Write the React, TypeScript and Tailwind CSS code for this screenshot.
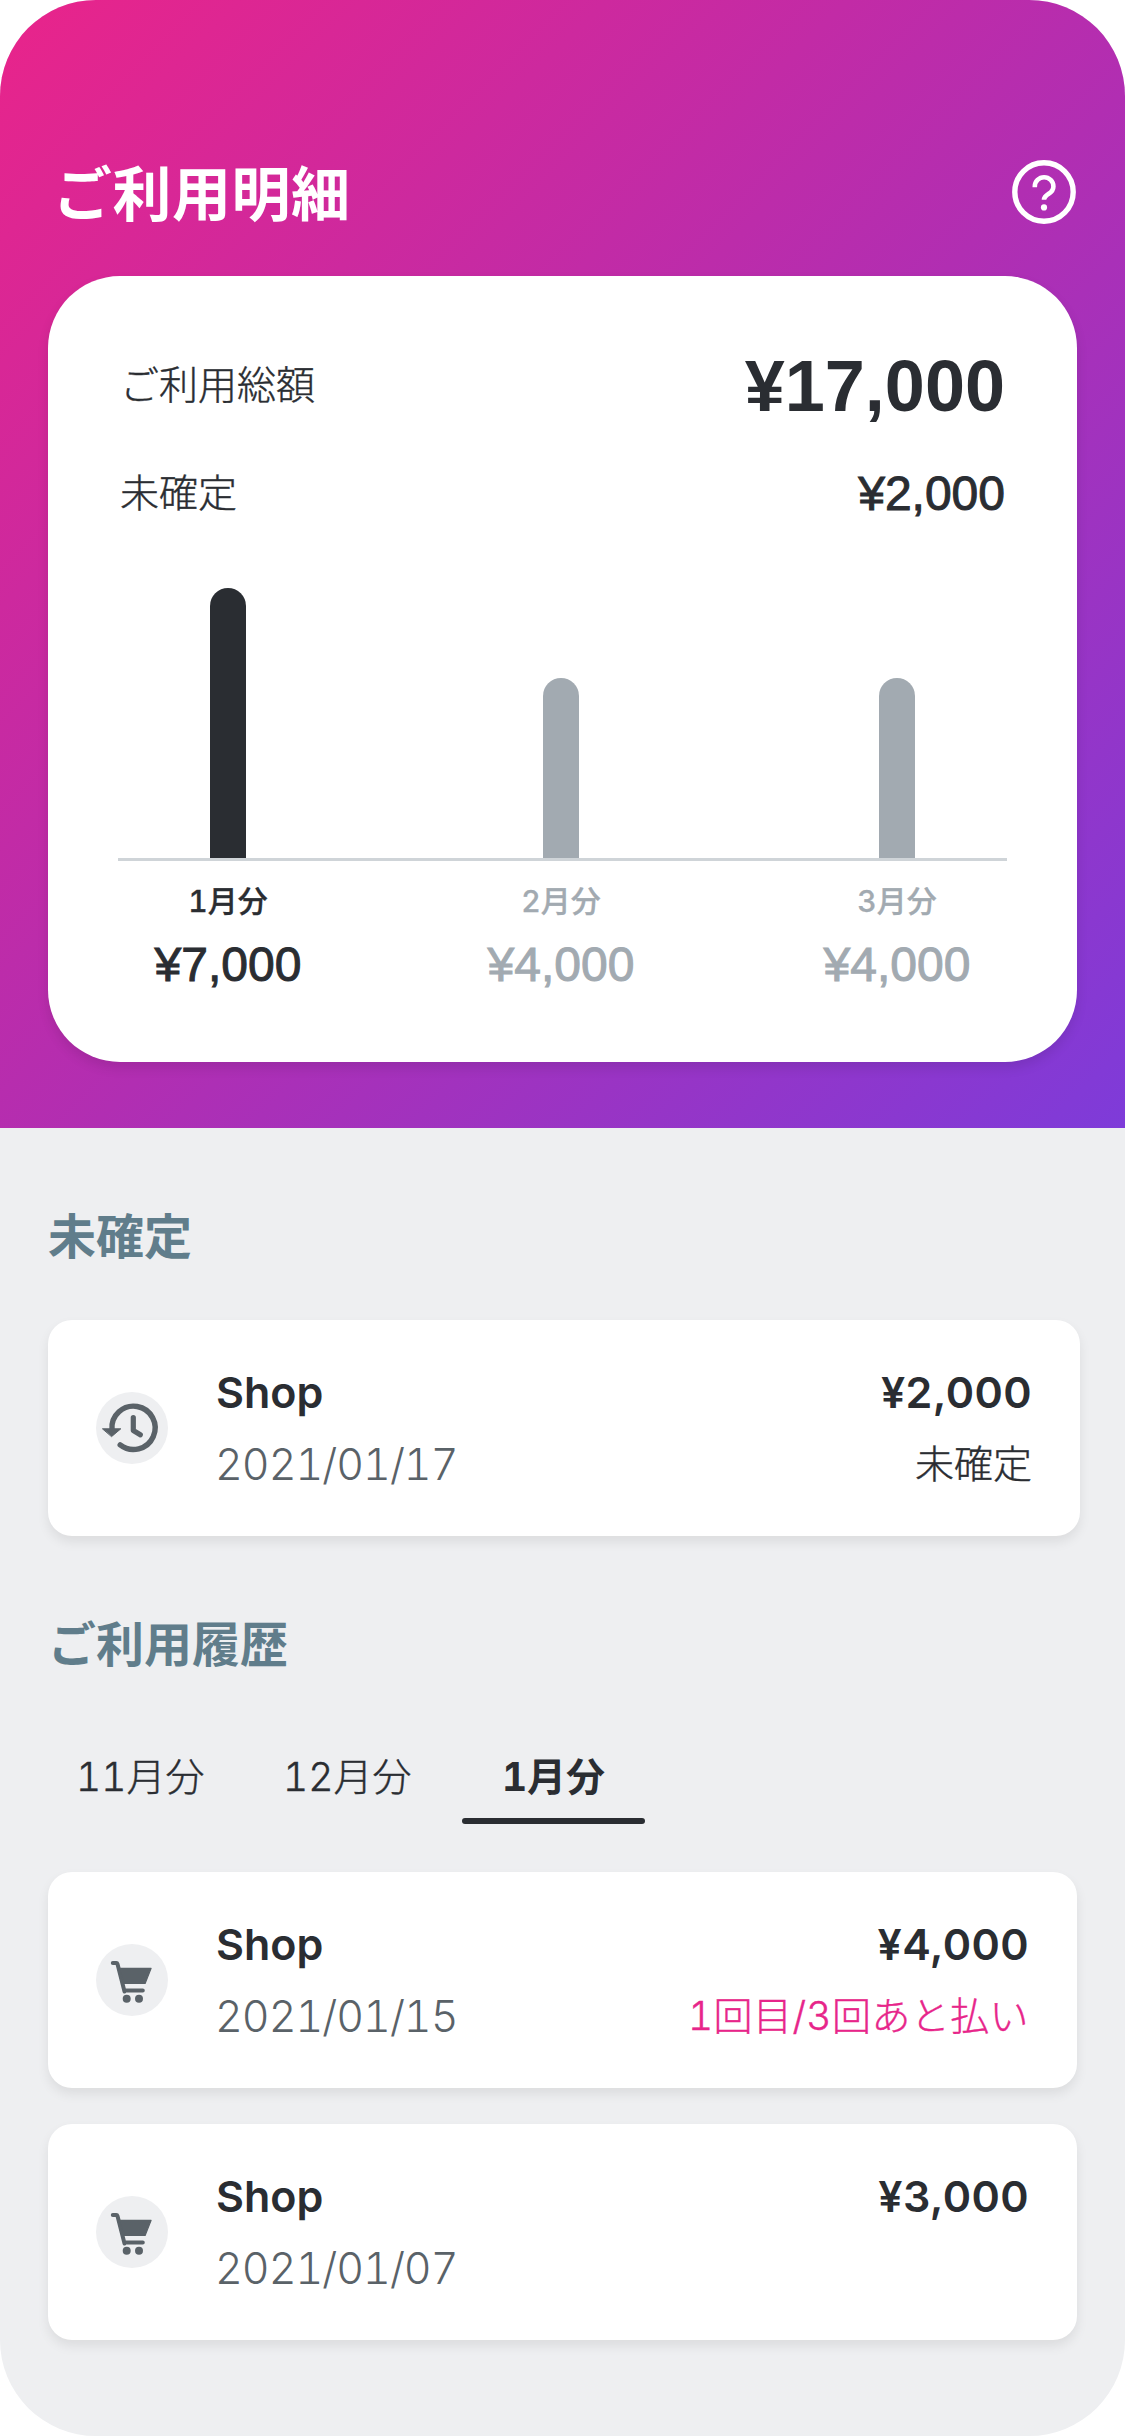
type Month = {
  label: string;
  amount: string;
  barHeight: string;
  bar: string;
  text: string;
  stroke: string;
  offset: string;
};

const months: Month[] = [
  {
    label: "1月分",
    amount: "¥7,000",
    barHeight: "h-[270px]",
    bar: "bg-[#2a2d32]",
    text: "text-[#2a2d32]",
    stroke: "[-webkit-text-stroke:1px_#2a2d32]",
    offset: "",
  },
  {
    label: "2月分",
    amount: "¥4,000",
    barHeight: "h-[180px]",
    bar: "bg-[#a2aab1]",
    text: "text-[#a2aab1]",
    stroke: "[-webkit-text-stroke:1px_#a2aab1]",
    offset: "mr-[3px]",
  },
  {
    label: "3月分",
    amount: "¥4,000",
    barHeight: "h-[180px]",
    bar: "bg-[#a2aab1]",
    text: "text-[#a2aab1]",
    stroke: "[-webkit-text-stroke:1px_#a2aab1]",
    offset: "",
  },
];

const HelpIcon = () => (
  <svg viewBox="0 0 64 64" className="size-16" fill="none" stroke="white">
    <circle cx="32" cy="32" r="29.2" strokeWidth="5.400" />
    <path
      d="M22.800 27.200v-.8a9.300 9.200 0 0 1 18.600 0c0 3.800-2 5.600-4.700 7.300-3 1.900-4.700 3.300-4.700 6.100"
      strokeWidth="4.600"
    />
    <circle cx="32" cy="47.400" r="3.100" fill="white" stroke="none" />
  </svg>
);

const ClockIcon = () => (
  <svg viewBox="0 0 72 72" className="size-[72px]" fill="none" stroke="#5a6268" strokeLinecap="round" strokeLinejoin="round">
    <path d="M16 37.500a21.600 21.600 0 1 1 8.200 15.300" strokeWidth="5.400" />
    <path d="M6.800 36.800h18L15.800 44.400z" fill="#5a6268" strokeWidth="1" />
    <path d="M37.300 25.500v13l7 4.300" strokeWidth="5.200" />
  </svg>
);

const CartIcon = () => (
  <svg viewBox="0 0 72 72" className="size-[72px]" fill="none" stroke="#5a6268" strokeLinecap="round" strokeLinejoin="round">
    <path d="M16.800 19h3.600q.8 0 1.100 1l7 27.500 .3-1h18" strokeWidth="4" />
    <path d="M23.500 24.300h31.600l-6 15.200H28z" fill="#5a6268" strokeWidth="1.200" />
    <circle cx="30.700" cy="54.700" r="4" fill="#5a6268" stroke="none" />
    <circle cx="43" cy="54.700" r="4" fill="#5a6268" stroke="none" />
  </svg>
);

type RowProps = {
  icon: "clock" | "cart";
  date: string;
  amount: string;
  note?: string;
  noteClass?: string;
};

const TransactionCard = ({ icon, date, amount, note, noteClass = "" }: RowProps) => (
  <article className="flex h-[216px] items-center rounded-3xl bg-white px-12 shadow-[0_6px_12px_rgba(0,0,0,0.08)]">
    <div className="size-[72px] shrink-0 rounded-full bg-[#eeeff1]">
      {icon === "clock" ? <ClockIcon /> : <CartIcon />}
    </div>
    <div className="ml-12 flex flex-1 flex-col">
      <div className="flex justify-between font-[Inter] text-[43px] leading-[72px] font-semibold text-[#2a2d32]">
        <span>Shop</span>
        <span className="tracking-[0.4px]">{amount}</span>
      </div>
      <div className="flex h-[72px] justify-between leading-[72px]">
        <span className="-ml-[1px] font-[Inter] text-[43px] font-light tracking-[-1px] text-[#5a6268] tabular-nums">
          {date}
        </span>
        {note && <span className={noteClass}>{note}</span>}
      </div>
    </div>
  </article>
);

export default function App() {
  return (
    <div className="h-[2436px] w-[1125px] bg-white font-['Noto_Sans_CJK_JP',sans-serif]">
      <div className="h-full overflow-hidden rounded-[96px] bg-[#eeeff1]">
        <header className="h-[1128px] bg-[linear-gradient(to_bottom_right,#e9248a_0%,#b12eb2_54%,#7e3bd9_100%)] px-12 pt-[156px]">
          <div className="flex h-[72px] items-center justify-between pr-[1px] pl-[5px]">
            <h1 className="-mt-[3px] text-[59px] leading-[72px] font-bold tracking-[0.5px] text-white">ご利用明細</h1>
            <HelpIcon />
          </div>
          <section className="mt-12 h-[786px] rounded-[72px] bg-white px-[70px] pt-[72px] text-[#2a2d32] shadow-[0_6px_12px_rgba(0,0,0,0.1)]">
            <div className="flex h-[72px] items-center justify-between px-[2px]">
              <span className="-mt-[3px] text-[39px] font-light [-webkit-text-stroke:0.4px_#2a2d32]">ご利用総額</span>
              <span className="mt-[4px] font-['Liberation_Sans'] text-[72px] font-bold">¥17,000</span>
            </div>
            <div className="mt-9 flex h-[72px] items-center justify-between px-[2px]">
              <span className="-mt-[3px] text-[39px] font-light [-webkit-text-stroke:0.4px_#2a2d32]">未確定</span>
              <span className="mt-[3px] font-['Liberation_Sans'] text-[48px] [-webkit-text-stroke:1px_#2a2d32]">¥2,000</span>
            </div>
            <div className="mt-[60px] flex h-[273px] items-end justify-between border-b-[3px] border-[#cfd4d8] px-[92px]">
              {months.map((m) => (
                <div key={m.label} className={`w-9 rounded-t-full ${m.barHeight} ${m.bar} ${m.offset}`} />
              ))}
            </div>
            <div className="flex justify-between pt-4">
              {months.map((m) => (
                <div key={m.label} className={`flex w-[220px] flex-col items-center ${m.text} ${m.offset}`}>
                  <span className="font-['Inter','Noto_Sans_CJK_JP',sans-serif] text-[30px] leading-[48px] font-medium tabular-nums [-webkit-text-stroke:0.3px_currentColor]">
                    {m.label}
                  </span>
                  <span className={`font-['Liberation_Sans'] text-[48px] leading-[80px] ${m.stroke}`}>{m.amount}</span>
                </div>
              ))}
            </div>
          </section>
        </header>

        <main className="px-12">
          <h2 className="mt-[69px] text-[48px] leading-[72px] font-bold text-[#607d8b]">未確定</h2>
          <div className="mt-[51px] -mr-[3px]">
            <TransactionCard
              icon="clock"
              date="2021/01/17"
              amount="¥2,000"
              note="未確定"
              noteClass="-mt-[3px] text-[39px] font-light text-[#2a2d32] [-webkit-text-stroke:0.4px_#2a2d32]"
            />
          </div>

          <h2 className="mt-[69px] text-[48px] leading-[72px] font-bold text-[#607d8b]">ご利用履歴</h2>
          <nav className="mt-[64px] flex h-[83px] font-['Inter','Noto_Sans_CJK_JP',sans-serif] text-[39px] leading-[72px] font-light text-[#2a2d32] tabular-nums">
            <span className="w-[207px] pl-[28px] [-webkit-text-stroke:0.4px_#2a2d32]">11月分</span>
            <span className="w-[207px] pl-[28px] [-webkit-text-stroke:0.4px_#2a2d32]">12月分</span>
            <span className="flex w-[183px] flex-col items-center font-bold">
              1月分
              <span className="mt-[5px] h-[6px] w-full rounded-full bg-[#2a2d32]" />
            </span>
          </nav>
          <div className="mt-12 flex flex-col gap-9">
            <TransactionCard
              icon="cart"
              date="2021/01/15"
              amount="¥4,000"
              note="1回目/3回あと払い"
              noteClass="font-['Inter','Noto_Sans_CJK_JP',sans-serif] text-[39px] font-light tracking-[0.4px] text-[#e7258a] tabular-nums [-webkit-text-stroke:0.4px_#e7258a]"
            />
            <TransactionCard icon="cart" date="2021/01/07" amount="¥3,000" />
          </div>
        </main>
      </div>
    </div>
  );
}
